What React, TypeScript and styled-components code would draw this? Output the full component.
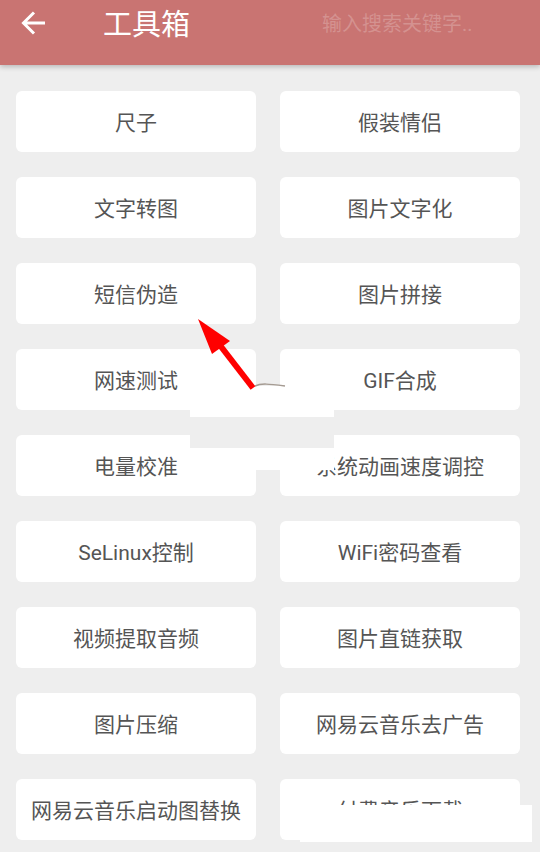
import * as React from 'react';
import styled, { createGlobalStyle } from 'styled-components';

const GlobalStyle = createGlobalStyle`
    html, body {
        margin: 0;
        padding: 0;
        background: #eeeeee;
    }
    body {
        font-family: Roboto, "Noto Sans CJK SC", "Noto Sans", sans-serif;
    }
`;

const Page = styled.div`
    position: relative;
    width: 540px;
    height: 852px;
    overflow: hidden;
    background: #eeeeee;
`;

const Toolbar = styled.header`
    position: relative;
    height: 65px;
    display: flex;
    align-items: flex-start;
    background: #c97472;
    box-shadow: 0 2px 5px rgba(0, 0, 0, 0.22);
    z-index: 1;
`;

const BackButton = styled.div`
    width: 26px;
    height: 26px;
    margin: 11px 0 0 21px;
    display: flex;
`;

const Title = styled.h1`
    margin: 11px 0 0 56px;
    font-size: 29px;
    line-height: 1;
    font-weight: 400;
    color: #ffffff;
`;

const Search = styled.div`
    margin: 14px 0 0 auto;
    width: 218px;
    font-size: 20px;
    line-height: 1;
    color: rgba(255, 255, 255, 0.22);
`;

const Grid = styled.div`
    display: grid;
    grid-template-columns: 240px 240px;
    column-gap: 24px;
    row-gap: 25px;
    padding: 26px 20px 0 16px;
`;

const Card = styled.div`
    height: 61px;
    box-sizing: border-box;
    padding-bottom: 2px;
    display: flex;
    align-items: center;
    justify-content: center;
    background: #ffffff;
    border-radius: 6px;
    font-size: 21px;
    color: #555555;
    white-space: nowrap;
    overflow: hidden;
`;

const Patch = styled.div<{ $left: number; $top: number; $w: number; $h: number }>`
    position: absolute;
    left: ${p => p.$left}px;
    top: ${p => p.$top}px;
    width: ${p => p.$w}px;
    height: ${p => p.$h}px;
    background: #ffffff;
    display: flex;
    flex-direction: column;
`;

const PatchBand = styled.div`
    margin-top: 31px;
    height: 31px;
    background: #eeeeee;
`;

const Annotation = styled.svg`
    position: absolute;
    left: 0;
    top: 0;
    pointer-events: none;
`;

const tools = [
    '尺子', '假装情侣',
    '文字转图', '图片文字化',
    '短信伪造', '图片拼接',
    '网速测试', 'GIF合成',
    '电量校准', '系统动画速度调控',
    'SeLinux控制', 'WiFi密码查看',
    '视频提取音频', '图片直链获取',
    '图片压缩', '网易云音乐去广告',
    '网易云音乐启动图替换', '付费音乐下载',
];

export default function App(): React.ReactElement {
    return (
        <Page>
            <GlobalStyle />
            <Toolbar>
                <BackButton>
                    <svg width="26" height="26" viewBox="0 0 26 26">
                        <path d="M24 12H3M13 1.5L2.5 12 13 22.5" fill="none" stroke="#ffffff" strokeWidth="3" />
                    </svg>
                </BackButton>
                <Title>工具箱</Title>
                <Search>输入搜索关键字..</Search>
            </Toolbar>
            <Grid>
                {tools.map(name => (
                    <Card key={name}>{name}</Card>
                ))}
            </Grid>
            <Patch $left={190} $top={386} $w={144} $h={84}>
                <PatchBand />
            </Patch>
            <Patch $left={300} $top={805} $w={232} $h={37} />
            <Annotation width="540" height="852" viewBox="0 0 540 852">
                <path d="M255 386c6-3 14-2 30 0" fill="none" stroke="#a59b92" strokeWidth="1.5" />
                <line x1="253" y1="388" x2="219" y2="344" stroke="#ff0000" strokeWidth="6" />
                <polygon points="198,319 230,341 212,354" fill="#ff0000" />
            </Annotation>
        </Page>
    );
}
